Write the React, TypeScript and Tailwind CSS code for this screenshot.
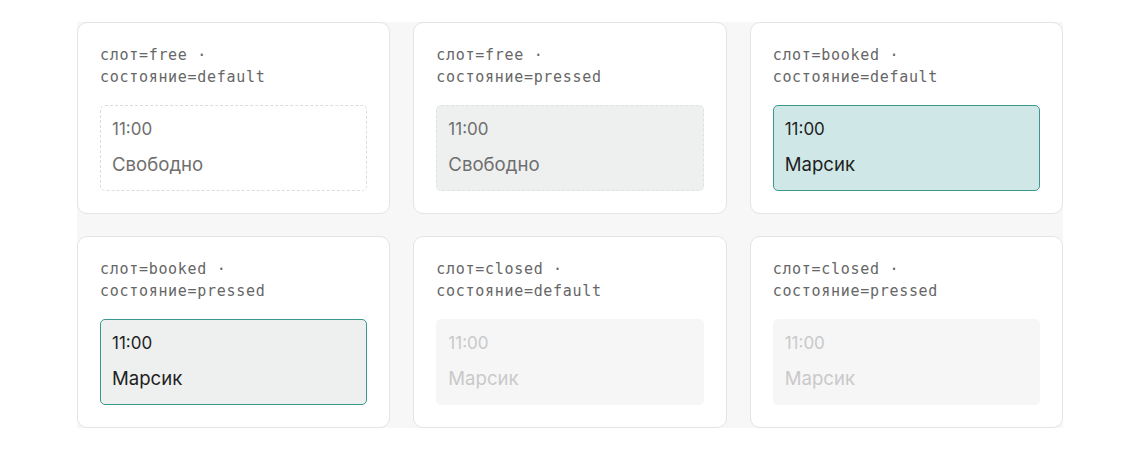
type Slot = 'free' | 'booked' | 'closed';
type State = 'default' | 'pressed';

const variants: { slot: Slot; state: State; label: string }[] = [
  { slot: 'free', state: 'default', label: 'Свободно' },
  { slot: 'free', state: 'pressed', label: 'Свободно' },
  { slot: 'booked', state: 'default', label: 'Марсик' },
  { slot: 'booked', state: 'pressed', label: 'Марсик' },
  { slot: 'closed', state: 'default', label: 'Марсик' },
  { slot: 'closed', state: 'pressed', label: 'Марсик' },
];

function slotClass(slot: Slot, state: State) {
  if (slot === 'free' && state === 'default') return 'bg-white border border-dashed border-[#dcdcdc] text-[#6f6f6f]';
  if (slot === 'free') return 'bg-[#eef0ef] border border-dashed border-[#dfe1e0] text-[#6f6f6f]';
  if (slot === 'booked' && state === 'default') return 'bg-[#cfe8e7] border-[1.5px] border-[#3a978d] text-[#1f1f1f]';
  if (slot === 'booked') return 'bg-[#eef0ef] border-[1.5px] border-[#3a978d] text-[#1f1f1f]';
  return 'bg-[#f6f6f6] border border-transparent text-[#c9c9c9]';
}

function SlotCell({ slot, state, label }: { slot: Slot; state: State; label: string }) {
  return (
    <div className={`h-[86px] rounded-[5px] px-[11px] pt-[12px] ${slotClass(slot, state)}`}>
      <div className="text-[17px] leading-[22px]">11:00</div>
      <div className="mt-[13px] text-[18.6px] leading-[22px]">{label}</div>
    </div>
  );
}

export default function App() {
  return (
    <div className="min-h-[450px] bg-white pt-[22px] font-['Inter',sans-serif]">
      <div className="mx-[77px] grid grid-cols-3 gap-x-[23px] gap-y-[22px] bg-[#f7f7f7]">
        {variants.map((v) => (
          <div
            key={v.slot + v.state}
            className="h-[192px] rounded-[10px] border border-[#e4e4e4] bg-white px-[22px] pt-[21px]"
          >
            <div className="font-['DejaVu_Sans_Mono',monospace] text-[15px] leading-[22px] tracking-[0.7px] text-[#666666]">
              <div>слот={v.slot} ·</div>
              <div>состояние={v.state}</div>
            </div>
            <div className="mt-[17px]">
              <SlotCell {...v} />
            </div>
          </div>
        ))}
      </div>
    </div>
  );
}
